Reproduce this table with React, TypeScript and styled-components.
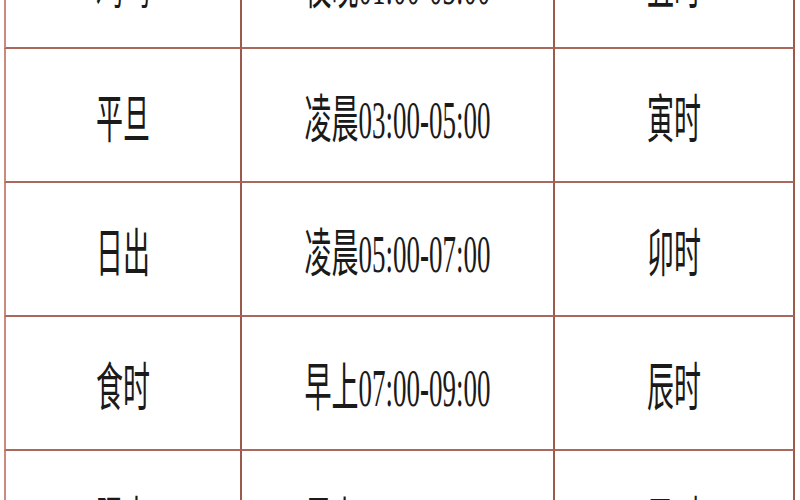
import styled, { createGlobalStyle } from "styled-components";

const GlobalStyle = createGlobalStyle`
  html, body {
    margin: 0;
    padding: 0;
    background: #ffffff;
  }
  body {
    width: 800px;
    height: 500px;
    overflow: hidden;
  }
`;

const rows = [
  ["鸡鸣", "夜晚01:00-03:00", "丑时"],
  ["平旦", "凌晨03:00-05:00", "寅时"],
  ["日出", "凌晨05:00-07:00", "卯时"],
  ["食时", "早上07:00-09:00", "辰时"],
  ["隅中", "早上09:00-11:00", "巳时"],
];

const App = () => {
  return (
    <>
      <GlobalStyle />
      <Page>
        <Table>
          {rows.map((row, i) =>
            row.map((text, j) => (
              <Cell key={`${i}-${j}`} $first={j === 0}>
                <Label>{text}</Label>
              </Cell>
            ))
          )}
        </Table>
      </Page>
    </>
  );
};

const Page = styled.div`
  width: 800px;
  height: 500px;
  overflow: hidden;
  background: #ffffff;
`;

const Table = styled.div`
  display: grid;
  grid-template-columns: 238px 313px 240px;
  grid-auto-rows: 134px;
  margin: -85px 0 0 4px;
`;

const Cell = styled.div<{ $first: boolean }>`
  box-sizing: border-box;
  display: flex;
  align-items: center;
  justify-content: center;
  border-right: 2px solid #9c5a4c;
  border-bottom: 2px solid #a8685c;
  border-left: ${(p) => (p.$first ? "2px solid #c98a80" : "none")};
`;

const Label = styled.span`
  display: inline-block;
  font-family: "Liberation Serif", "Noto Sans CJK SC", serif;
  font-size: 27px;
  color: #1a1a1a;
  transform: scaleY(1.95);
  white-space: nowrap;
`;

export default App;
